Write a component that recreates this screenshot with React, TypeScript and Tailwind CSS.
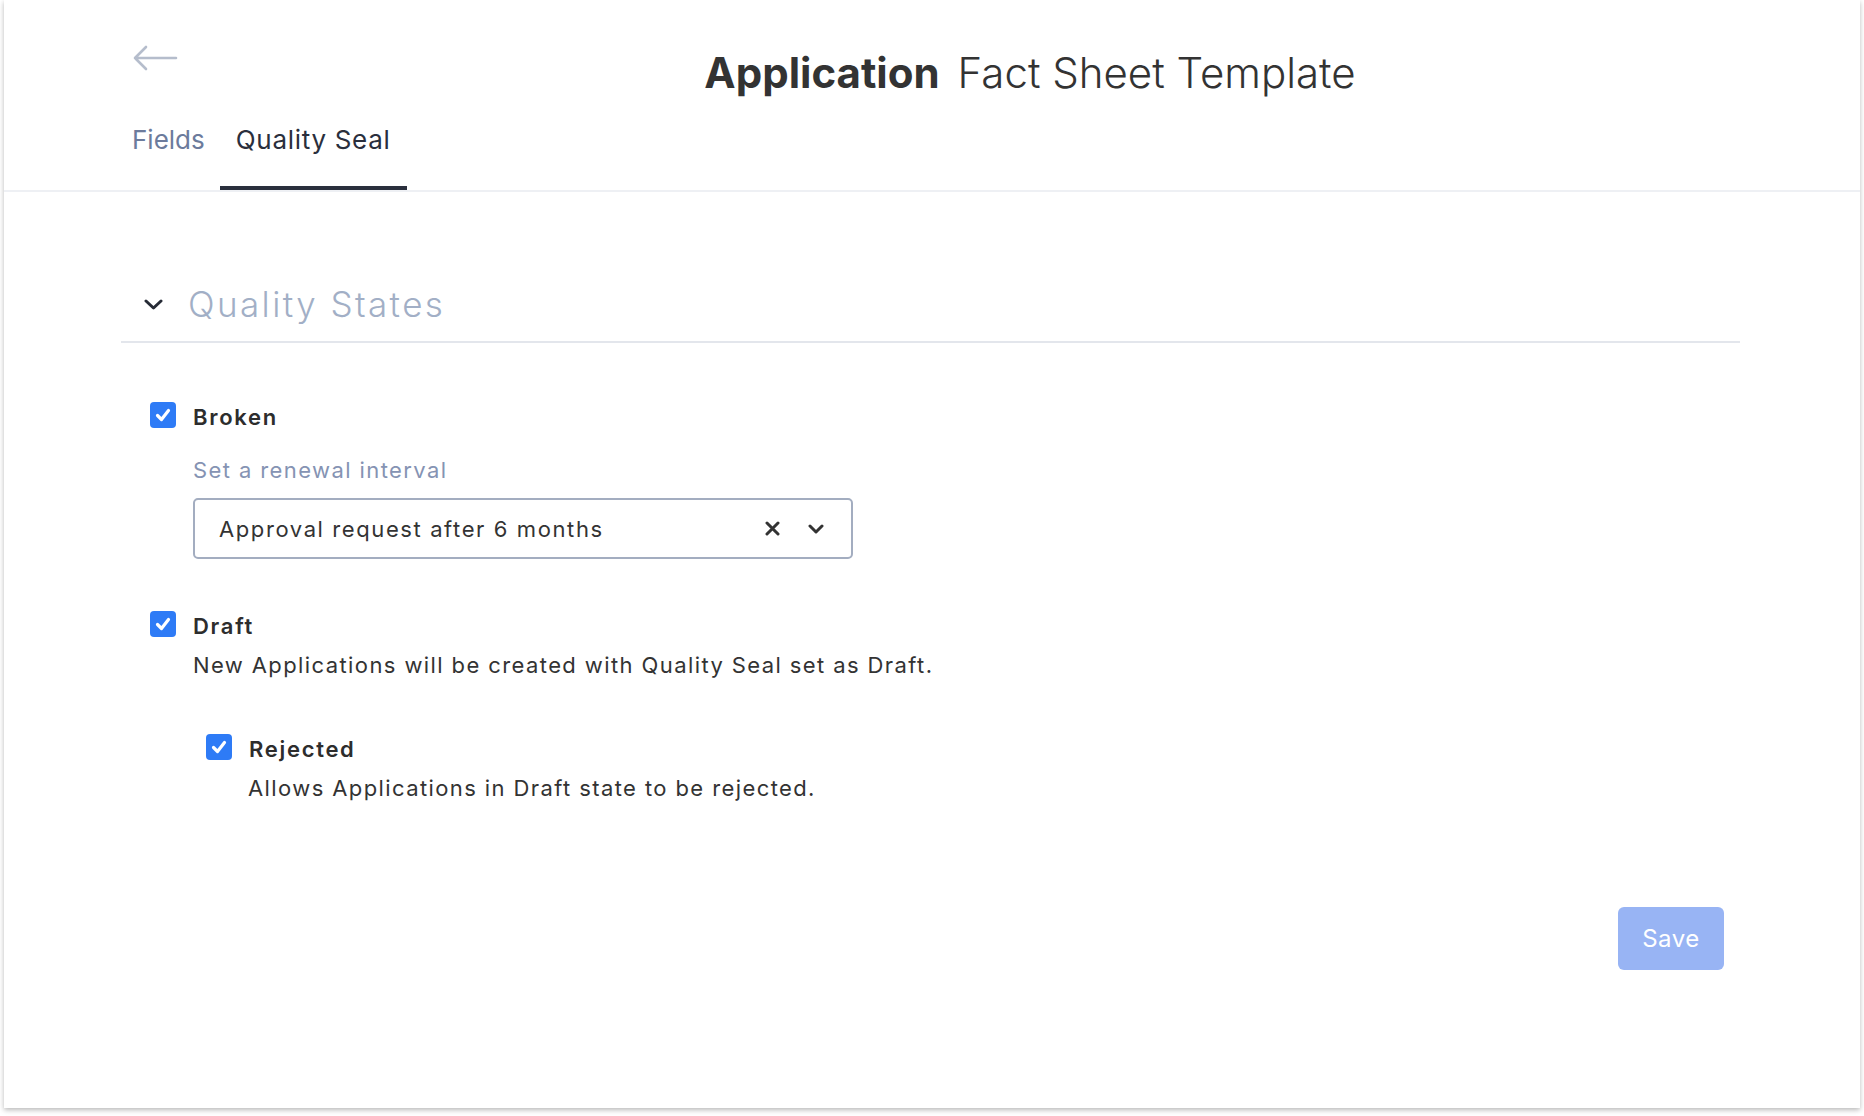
import React from "react";

function Check() {
  return (
    <span className="flex h-[26px] w-[26px] shrink-0 items-center justify-center rounded-[4px] bg-[#2e7bf6]">
      <svg width="18" height="18" viewBox="0 0 18 18" fill="none">
        <path d="M3.5 9.5L7.5 13.5L14.5 4.5" stroke="#fff" strokeWidth="3.2" strokeLinecap="round" strokeLinejoin="round" />
      </svg>
    </span>
  );
}

function CheckRow({ label }: { label: string }) {
  return (
    <div className="flex items-center gap-[17px]">
      <Check />
      <span className="translate-y-[2px] text-[22px] leading-[26px] font-semibold tracking-[1.7px] text-[#2d2d2d]">{label}</span>
    </div>
  );
}

export default function App() {
  return (
    <div className="flex h-[1116px] flex-col bg-white px-[4px] pb-[8px] font-['Inter',sans-serif]">
      <div className="flex flex-1 flex-col bg-white shadow-[0_2px_5px_rgba(0,0,0,0.28)]">
        {/* Header */}
        <header className="border-b-2 border-[#eef0f4]">
          <div className="flex items-start pt-[45px]">
            <div className="w-[196px] pl-[128px]">
              <svg width="46" height="26" viewBox="0 0 46 26" fill="none">
                <path d="M44 13H3M14 2L3 13L14 24" stroke="#b5bdcc" strokeWidth="2.6" strokeLinecap="round" strokeLinejoin="round" />
              </svg>
            </div>
            <h1 className="mt-[7px] flex-1 text-center text-[42px] leading-[42px] text-[#333333]">
              <span className="font-bold">Application</span>
              <span className="ml-[18px] font-light">Fact Sheet Template</span>
            </h1>
          </div>
          <nav className="mt-[30px] flex pl-[113px]">
            <button className="border-b-4 border-transparent px-[15px] pb-[30px] text-[26px] leading-[32px] text-[#6c7b9c]">
              Fields
            </button>
            <button className="border-b-4 border-[#2a2f3d] px-[16px] pb-[30px] text-[26px] leading-[32px] tracking-[0.7px] text-[#2a2f3d]">
              Quality Seal
            </button>
          </nav>
        </header>

        {/* Main */}
        <main className="ml-[117px] mr-[120px] mt-[91px]">
          <div className="flex items-center gap-[25px] border-b-2 border-[#e3e6ec] pb-[16px] pl-[23px]">
            <svg width="19" height="11" viewBox="0 0 19 11" fill="none">
              <path d="M2 2L9.5 9L17 2" stroke="#262b36" strokeWidth="3" strokeLinecap="round" strokeLinejoin="round" />
            </svg>
            <h2 className="text-[35px] leading-[42px] font-light tracking-[2.4px] text-[#a2afc6]">Quality States</h2>
          </div>

          <div className="pl-[29px] text-[22px] leading-[26px] tracking-[1.4px]">
            <div className="mt-[59px]">
              <CheckRow label="Broken" />
              <div className="pl-[43px]">
                <p className="mt-[29px] text-[#8593b3]">Set a renewal interval</p>
                <div className="mt-[15px] flex h-[61px] w-[660px] items-center rounded-[5px] border-2 border-[#a3adc0] pl-[24px] pr-[27px]">
                  <span className="flex-1 tracking-[1.6px] text-[#333333]">Approval request after 6 months</span>
                  <svg width="15" height="15" viewBox="0 0 15 15" fill="none">
                    <path d="M2 2L13 13M13 2L2 13" stroke="#333" strokeWidth="3" strokeLinecap="round" />
                  </svg>
                  <svg className="ml-[28px]" width="16" height="10" viewBox="0 0 16 10" fill="none">
                    <path d="M2 2L8 8L14 2" stroke="#333" strokeWidth="3" strokeLinecap="round" strokeLinejoin="round" />
                  </svg>
                </div>
              </div>
            </div>

            <div className="mt-[52px]">
              <CheckRow label="Draft" />
              <p className="mt-[15px] pl-[43px] text-[#333333]">
                New Applications will be created with Quality Seal set as Draft.
              </p>
              <div className="ml-[56px] mt-[56px]">
                <CheckRow label="Rejected" />
                <p className="mt-[15px] pl-[42px] text-[#333333]">
                  Allows Applications in Draft state to be rejected.
                </p>
              </div>
            </div>
          </div>

          <div className="mt-[106px] flex justify-end pr-[16px]">
            <button className="h-[63px] w-[106px] rounded-[6px] bg-[#98b4f4] text-[24px] tracking-[0.5px] text-white">Save</button>
          </div>
        </main>
      </div>
    </div>
  );
}
